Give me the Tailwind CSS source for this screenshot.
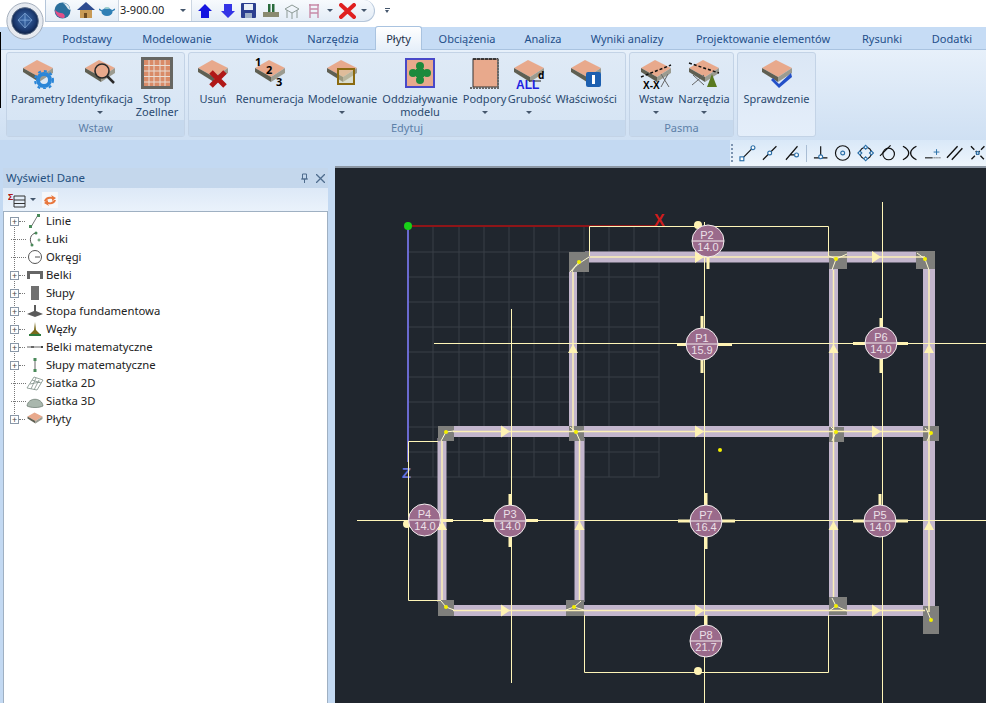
<!DOCTYPE html>
<html lang="pl">
<head>
  <meta charset="UTF-8" />
  <title>Płyty</title>
  <script src="https://cdn.jsdelivr.net/npm/@tailwindcss/browser@4"></script>
</head>
<body class="relative w-[986px] h-[703px] overflow-hidden bg-[#c3d9f2] font-['Noto_Sans','DejaVu_Sans',sans-serif] text-[#2b4a70]">

  <!-- shared icon parts -->
  <svg class="hidden">
    <symbol id="slab" viewBox="0 0 32 32">
      <polygon points="1,11 15,3 31,11 17,20" fill="#e8a98c"/>
      <polygon points="1,11 17,20 17,25 1,15" fill="#5f5f52"/>
      <polygon points="17,20 31,11 31,16 17,25" fill="#9b9b90"/>
    </symbol>
  </svg>

  <!-- logo button -->
  <svg class="absolute left-[6px] top-[2px] z-20" width="38" height="38" viewBox="0 0 44 44">
    <defs>
      <radialGradient id="orb" cx="50%" cy="45%" r="55%">
        <stop offset="0%" stop-color="#3f6fb0"/><stop offset="70%" stop-color="#1c3a70"/><stop offset="100%" stop-color="#0d2045"/>
      </radialGradient>
    </defs>
    <circle cx="22" cy="22" r="21" fill="#e6eaf0" stroke="#9aa6b5"/>
    <circle cx="22" cy="22" r="15.5" fill="url(#orb)" stroke="#5e6f88"/>
    <path d="M22 13l8 8-8 9-8-9z M14 21h16 M22 13v17" fill="none" stroke="#7ea6d8" stroke-width="1"/>
  </svg>
  <div class="absolute left-0 top-[32px] w-px h-[76px] bg-black z-10"></div>

  <!-- quick access bar -->
  <div class="h-[27px] bg-white flex items-start pl-[45px]">
    <div class="w-[330px] h-[22px] flex items-center pl-[8px] bg-gradient-to-b from-[#f7fafd] to-[#e3ecf6] border border-t-0 border-[#b5c6da] rounded-br-[11px] rounded-tr-[11px]">
      <svg width="17" height="17" viewBox="0 0 17 17"><circle cx="8.5" cy="8.5" r="8" fill="#2b6f9c"/><path d="M1 8a8 8 0 0 0 9 8c2-2 0-5-3-5-2 0-4-1-6-3z" fill="#e0508a"/><path d="M9 1c4 0 7 3 7 7-3-1-3-4-7-7z" fill="#dfe9ef"/></svg>
      <svg class="ml-[6px]" width="18" height="17" viewBox="0 0 18 17"><polygon points="9,0 18,8 0,8" fill="#2d4c90"/><rect x="3" y="8" width="12" height="8" fill="#c89a55"/><rect x="7" y="11" width="3" height="5" fill="#6c4a20"/></svg>
      <svg class="ml-[4px]" width="16" height="12" viewBox="0 0 16 12"><ellipse cx="8" cy="7" rx="5.5" ry="4" fill="#2f7fb5"/><path d="M3 6L0 4M13 6l3-2" stroke="#2f7fb5" stroke-width="1.5"/><ellipse cx="8" cy="3" rx="2.5" ry="1" fill="#9cc"/></svg>
      <div class="ml-[3px] w-[74px] h-[21px] bg-white border-x border-[#ccd6e2] flex items-center justify-between pl-[1px] pr-[5px] text-[11px] text-[#222]">
        <span>3-900.00</span><span class="w-0 h-0 border-x-[3px] border-x-transparent border-t-[3px] border-t-[#44566c]"></span>
      </div>
      <svg class="ml-[5px]" width="16" height="16" viewBox="0 0 16 16"><path d="M8 1l7 7h-3v7H4V8H1z" fill="#1414e0"/></svg>
      <svg class="ml-[7px]" width="16" height="16" viewBox="0 0 16 16"><path d="M8 15l7-7h-3V1H4v7H1z" fill="#3434e6"/></svg>
      <svg class="ml-[5px]" width="15" height="15" viewBox="0 0 15 15"><rect width="15" height="15" rx="1" fill="#2c3f90"/><rect x="3" y="1" width="9" height="6" fill="#e8eef6"/><rect x="4" y="10" width="7" height="5" fill="#9fb0c8"/></svg>
      <svg class="ml-[6px]" width="18" height="15" viewBox="0 0 18 15"><rect x="1" y="9" width="16" height="5" fill="#8a8a70"/><rect x="6" y="1" width="2.5" height="8" fill="#2a6b3c"/><rect x="10" y="1" width="2.5" height="8" fill="#2a6b3c"/></svg>
      <svg class="ml-[4px]" width="16" height="16" viewBox="0 0 16 16" fill="none" stroke="#8d9a96"><path d="M1 6l7-4 7 4-7 4zM3 7v8M13 7v8M8 10v6"/></svg>
      <svg class="ml-[8px]" width="12" height="16" viewBox="0 0 12 16" fill="none" stroke="#c88ba8" stroke-width="1.4"><path d="M2 1v14M10 1v14M1 2h10M2 6h8M2 10h8"/></svg>
      <span class="ml-[7px] w-0 h-0 border-x-[3px] border-x-transparent border-t-[3px] border-t-[#44566c]"></span>
      <svg class="ml-[6px]" width="17" height="16" viewBox="0 0 17 16"><path d="M2 2l13 12M15 2L2 14" stroke="#e02020" stroke-width="4" stroke-linecap="round"/></svg>
      <span class="ml-[5px] w-0 h-0 border-x-[3px] border-x-transparent border-t-[3px] border-t-[#44566c]"></span>
    </div>
    <div class="ml-[10px] mt-[8px] w-[5px]"><div class="h-px bg-[#44566c] mb-[1px]"></div><div class="w-0 h-0 border-x-[2.5px] border-x-transparent border-t-[3px] border-t-[#44566c]"></div></div>
  </div>

  <!-- tabs -->
  <nav class="h-[23px] flex bg-[#c6dcf5] pl-[46px] text-[11px] text-[#1f4f8a] leading-[23px] text-center border-b border-[#a9c3e0]">
    <span class="w-[82px]">Podstawy</span>
    <span class="w-[98px]">Modelowanie</span>
    <span class="w-[72px]">Widok</span>
    <span class="w-[70px]">Narzędzia</span>
    <span class="ml-[7px] w-[47px] h-[24px] bg-gradient-to-b from-white to-[#e6eff9] border border-b-0 border-[#a9c3e0] rounded-t-[3px] text-[#1c2f48] -mt-[1px]">Płyty</span>
    <span class="w-[90px]">Obciążenia</span>
    <span class="w-[62px]">Analiza</span>
    <span class="w-[106px]">Wyniki analizy</span>
    <span class="w-[166px]">Projektowanie elementów</span>
    <span class="w-[72px]">Rysunki</span>
    <span class="w-[68px]">Dodatki</span>
  </nav>

  <!-- ribbon -->
  <section class="h-[90px] flex gap-[3px] pl-[6px] pt-[2px] bg-gradient-to-b from-[#e7f0fa] to-[#cfe0f3] text-[11px] leading-[13px] text-center">
    <div class="w-[179px] h-[85px] flex flex-col rounded-[3px] border border-[#c3d3e6] bg-gradient-to-b from-[#dfeaf6] to-[#d5e4f4]">
      <div class="flex-1 flex">
        <div class="w-[62px] flex flex-col items-center pt-[4px]">
          <svg width="32" height="32" viewBox="0 0 32 32"><use href="#slab"/><circle cx="22" cy="23" r="6" fill="none" stroke="#2b86d8" stroke-width="4"/><circle cx="22" cy="23" r="9" fill="none" stroke="#2b86d8" stroke-width="2" stroke-dasharray="3 3"/></svg>
          <span class="mt-[3px] whitespace-nowrap">Parametry</span>
        </div>
        <div class="w-[62px] flex flex-col items-center pt-[4px]">
          <svg width="32" height="32" viewBox="0 0 32 32"><use href="#slab"/><circle cx="18" cy="14" r="7" fill="#e8a98c" stroke="#2a2a2a" stroke-width="1.6"/><path d="M23 19l7 7" stroke="#2a2a2a" stroke-width="2.5"/></svg>
          <span class="mt-[3px] whitespace-nowrap">Identyfikacja</span>
          <i class="mt-[6px] w-0 h-0 border-x-[3px] border-x-transparent border-t-[3px] border-t-[#44566c]"></i>
        </div>
        <div class="w-[52px] flex flex-col items-center pt-[4px]">
          <svg width="32" height="32" viewBox="0 0 32 32"><rect width="32" height="32" fill="#666662"/><path d="M3 3h26v26H3z" fill="#d98b68"/><path d="M3 8.500h26M3 14h26M3 19.500h26M3 25h26M8 3v26M13 3v26M19 3v26M24 3v26" stroke="#e9ddd4" stroke-width="1"/></svg>
          <span class="mt-[3px]">Strop<br>Zoellner</span>
        </div>
      </div>
      <div class="h-[16px] bg-[#c6d9ee] text-[#5d80a8] leading-[16px]">Wstaw</div>
    </div>

    <div class="w-[438px] h-[85px] flex flex-col rounded-[3px] border border-[#c3d3e6] bg-gradient-to-b from-[#dfeaf6] to-[#d5e4f4]">
      <div class="flex-1 flex">
        <div class="w-[48px] flex flex-col items-center pt-[4px]">
          <svg width="32" height="32" viewBox="0 0 32 32"><use href="#slab"/><path d="M14 15l14 14M28 15L14 29" stroke="#b01818" stroke-width="5"/></svg>
          <span class="mt-[3px]">Usuń</span>
        </div>
        <div class="w-[66px] flex flex-col items-center pt-[4px]">
          <svg class="overflow-visible" width="32" height="32" viewBox="0 0 32 32"><use href="#slab"/><text x="1" y="9" class="text-[11px] font-bold" fill="#000">1</text><text x="12" y="17" class="text-[11px] font-bold" fill="#000">2</text><text x="22" y="29" class="text-[11px] font-bold" fill="#000">3</text></svg>
          <span class="mt-[3px] whitespace-nowrap">Renumeracja</span>
        </div>
        <div class="w-[80px] flex flex-col items-center pt-[4px]">
          <svg width="32" height="32" viewBox="0 0 32 32"><use href="#slab"/><rect x="12" y="12" width="16" height="15" fill="#d5cfa8" fill-opacity=".5" stroke="#8a6a10" stroke-width="2"/></svg>
          <span class="mt-[3px] whitespace-nowrap">Modelowanie</span>
          <i class="mt-[6px] w-0 h-0 border-x-[3px] border-x-transparent border-t-[3px] border-t-[#44566c]"></i>
        </div>
        <div class="w-[76px] flex flex-col items-center pt-[4px]">
          <svg width="32" height="32" viewBox="0 0 32 32"><rect x="2" y="2" width="28" height="28" fill="#e8a98c" stroke="#4848c8" stroke-width="2"/><circle cx="16" cy="9" r="4" fill="#1c8a3c"/><circle cx="16" cy="23" r="4" fill="#1c8a3c"/><circle cx="9" cy="16" r="4" fill="#1c8a3c"/><circle cx="23" cy="16" r="4" fill="#1c8a3c"/><rect x="12" y="12" width="8" height="8" fill="#1c8a3c"/></svg>
          <span class="mt-[3px] whitespace-nowrap">Oddziaływanie<br>modelu</span>
        </div>
        <div class="w-[54px] flex flex-col items-center pt-[4px]">
          <svg width="32" height="32" viewBox="0 0 32 32"><rect x="4" y="2" width="25" height="28" fill="#e8a98c" stroke="#333"/><path d="M4 2h25" stroke="#222" stroke-width="1.5" stroke-dasharray="3 1"/><path d="M1 31h30M29 2v28" stroke="#666" stroke-dasharray="2 1" stroke-width="2"/></svg>
          <span class="mt-[3px]">Podpory</span>
          <i class="mt-[6px] w-0 h-0 border-x-[3px] border-x-transparent border-t-[3px] border-t-[#44566c]"></i>
        </div>
        <div class="w-[36px] flex flex-col items-center pt-[4px]">
          <svg class="overflow-visible" width="32" height="32" viewBox="0 0 32 32"><use href="#slab"/><path d="M16 24h12" stroke="#222"/><text x="25" y="22" class="text-[10px] font-bold" fill="#000">d</text><text x="3" y="32" class="text-[12px] font-bold font-['Liberation_Sans']" fill="#2020e0">ALL</text></svg>
          <span class="mt-[3px] whitespace-nowrap">Grubość</span>
          <i class="mt-[6px] w-0 h-0 border-x-[3px] border-x-transparent border-t-[3px] border-t-[#44566c]"></i>
        </div>
        <div class="w-[78px] flex flex-col items-center pt-[4px]">
          <svg width="32" height="32" viewBox="0 0 32 32"><use href="#slab"/><rect x="16" y="15" width="15" height="15" rx="2" fill="#1c5fb0"/><rect x="22" y="18" width="3" height="9" fill="#fff"/></svg>
          <span class="mt-[3px]">Właściwości</span>
        </div>
      </div>
      <div class="h-[16px] bg-[#c6d9ee] text-[#5d80a8] leading-[16px]">Edytuj</div>
    </div>

    <div class="w-[105px] h-[85px] flex flex-col rounded-[3px] border border-[#c3d3e6] bg-gradient-to-b from-[#dfeaf6] to-[#d5e4f4]">
      <div class="flex-1 flex pl-[1px]">
        <div class="w-[50px] flex flex-col items-center pt-[4px]">
          <svg class="overflow-visible" width="32" height="32" viewBox="0 0 32 32"><use href="#slab"/><path d="M1 20L31 8" stroke="#111" stroke-width="1.5" stroke-dasharray="3 2"/><path d="M21 17l8 13M28 17l-7 13" stroke="#666"/><text x="3" y="32" class="text-[10px] font-bold font-['Liberation_Sans']" fill="#000">X-X</text></svg>
          <span class="mt-[3px]">Wstaw</span>
          <i class="mt-[6px] w-0 h-0 border-x-[3px] border-x-transparent border-t-[3px] border-t-[#44566c]"></i>
        </div>
        <div class="w-[46px] flex flex-col items-center pt-[4px]">
          <svg width="32" height="32" viewBox="0 0 32 32"><use href="#slab"/><path d="M1 6l30 10" stroke="#111" stroke-width="1.5" stroke-dasharray="3 2"/><path d="M4 28L16 18M16 28L5 18" stroke="#666"/><path d="M24 17l-5 13h10z" fill="#5a7a20"/></svg>
          <span class="mt-[3px] whitespace-nowrap">Narzędzia</span>
          <i class="mt-[6px] w-0 h-0 border-x-[3px] border-x-transparent border-t-[3px] border-t-[#44566c]"></i>
        </div>
      </div>
      <div class="h-[16px] bg-[#c6d9ee] text-[#5d80a8] leading-[16px]">Pasma</div>
    </div>

    <div class="w-[79px] h-[85px] flex flex-col items-center pt-[4px] rounded-[3px] border border-[#c3d3e6] bg-gradient-to-b from-[#dbe7f5] to-[#e4eefa]">
      <svg width="32" height="32" viewBox="0 0 32 32"><use href="#slab"/><path d="M12 21l6 6L30 16l1 4-13 11-8-8z" fill="#2350c8"/></svg>
      <span class="mt-[3px]">Sprawdzenie</span>
    </div>
  </section>

  <!-- snap toolbar -->
  <div class="h-[26px] flex justify-end bg-[#c3d9f2]">
    <div class="w-[256px] h-[26px] flex items-center gap-[5px] pl-[1px] bg-gradient-to-b from-[#d9e8f8] to-[#eef5fc]">
      <span class="w-[2px] h-[18px] mr-[1px] border-l-2 border-dotted border-[#7d94b0]"></span>
      <svg width="18" height="18" viewBox="0 0 18 18" fill="none" stroke="#111" stroke-width="1.2"><path d="M3 15L15 3"/><circle cx="14.5" cy="3.5" r="2" fill="#fff" stroke="#2b6fa8"/><rect x="1" y="13" width="4" height="4" fill="#fff" stroke="#2b6fa8"/></svg>
      <svg width="18" height="18" viewBox="0 0 18 18" fill="none" stroke="#111" stroke-width="1.2"><path d="M2 16L16 2"/><circle cx="9" cy="9" r="2" fill="#fff" stroke="#2b6fa8"/></svg>
      <svg width="18" height="18" viewBox="0 0 18 18" fill="none" stroke="#111" stroke-width="1.2"><path d="M2 16L14 2M6 11h6"/><circle cx="13" cy="11" r="2" fill="#fff" stroke="#2b6fa8"/></svg>
      <span class="w-px h-[17px] bg-[#a9bdd4]"></span>
      <svg width="18" height="18" viewBox="0 0 18 18" fill="none" stroke="#111" stroke-width="1.2"><path d="M9 2v11M2 14h14"/><circle cx="9" cy="13" r="2" fill="#fff" stroke="#2b6fa8"/></svg>
      <svg width="18" height="18" viewBox="0 0 18 18" fill="none" stroke="#111" stroke-width="1.2"><circle cx="9" cy="9" r="7.5"/><circle cx="9" cy="9" r="2" stroke="#2b6fa8"/></svg>
      <svg width="18" height="18" viewBox="0 0 18 18" fill="none" stroke="#111" stroke-width="1.2"><circle cx="9" cy="9" r="6"/><path d="M9 1l2 2-2 2-2-2zM9 13l2 2-2 2-2-2zM1 9l2-2 2 2-2 2zM13 9l2-2 2 2-2 2z" fill="#fff" stroke="#2b6fa8"/></svg>
      <svg width="18" height="18" viewBox="0 0 18 18" fill="none" stroke="#111" stroke-width="1.2"><circle cx="10" cy="10" r="6"/><path d="M1 12L12 1"/></svg>
      <svg width="18" height="18" viewBox="0 0 18 18" fill="none" stroke="#111" stroke-width="1.4"><path d="M2 2C10 6 10 12 2 16M16 2C8 6 8 12 16 16"/></svg>
      <svg width="18" height="18" viewBox="0 0 18 18" fill="none"><path d="M1 14h8" stroke="#222" stroke-width="1.2"/><path d="M10 14h7" stroke="#222" stroke-dasharray="1 1"/><path d="M13 5v6M10 8h6" stroke="#2b6fa8"/></svg>
      <svg width="18" height="18" viewBox="0 0 18 18" fill="none" stroke="#111" stroke-width="1.4"><path d="M1 14L12 2M6 16L17 4"/></svg>
      <svg width="18" height="18" viewBox="0 0 18 18" fill="none" stroke="#111" stroke-width="1.4"><path d="M2 2l14 14M16 2L2 16" stroke-dasharray="5 2"/><circle cx="9" cy="9" r="1.5" fill="#fff" stroke="#2b6fa8"/></svg>
    </div>
  </div>

  <!-- main area -->
  <main class="h-[537px] flex">
    <!-- data panel -->
    <aside class="w-[335px] pt-[2px] pl-[3px] pr-[7px] flex flex-col">
      <div class="h-[20px] flex items-center justify-between pl-[3px] pr-[3px] bg-[#c4d7ec] text-[11.5px] text-[#25507f]">
        <span>Wyświetl Dane</span>
        <span class="flex items-center gap-[7px] text-[#5d7c9e]">
          <svg width="9" height="10" viewBox="0 0 9 10" fill="none" stroke="#4f6d8e"><path d="M2.5 1h4v5h-4zM1 6h7M4.5 6v4"/></svg>
          <svg width="9" height="9" viewBox="0 0 9 9" stroke="#4f6d8e" stroke-width="1.3"><path d="M0 0l9 9M9 0L0 9"/></svg>
        </span>
      </div>
      <div class="h-[23px] flex items-center pl-[5px] bg-gradient-to-b from-[#dde9f7] to-[#eaf2fb]">
        <svg width="18" height="17" viewBox="0 0 18 17"><text x="0" y="9" class="text-[9px] font-bold" fill="#b01818">Σ</text><path d="M6 5h11v11H6zM6 9h11M6 12.500h11" fill="none" stroke="#333"/></svg>
        <i class="ml-[4px] w-0 h-0 border-x-[3px] border-x-transparent border-t-[3px] border-t-[#44566c]"></i>
        <svg class="ml-[6px]" width="16" height="16" viewBox="0 0 16 16"><rect width="16" height="16" fill="#f4f7fb"/><path d="M2 9c1-4 5-5 8-4l-1-2 5 3-4 3V7C7 6 5 7 4 10zM14 8c-1 4-5 5-8 4l1 2-5-3 4-3v2c3 1 4 0 6-2z" fill="#e8763c"/></svg>
      </div>
      <div class="relative flex-1 bg-white border border-b-0 border-[#9fb0c2] pl-[6px] text-[11.3px] text-[#222]">
        <div class="absolute left-[10px] top-[5px] h-[205px] border-l border-dotted border-[#777]"></div>
        <div class="h-[18px] flex items-center"><i class="relative w-[9px] h-[9px] bg-white border border-[#8a98a8] flex items-center justify-center text-[9px] leading-none not-italic text-[#444]">+</i><i class="w-[6px] border-t border-dotted border-[#777]"></i><svg class="ml-[1px] w-[18px]" height="16" viewBox="0 0 18 16"><path d="M5 14L12 2" stroke="#777"/><rect x="3" y="12" width="3" height="3" fill="#4a8a5a"/><rect x="11" y="1" width="3" height="3" fill="#4a8a5a"/></svg><span class="ml-[2px]">Linie</span></div>
        <div class="h-[18px] flex items-center"><i class="w-[15px] border-t border-dotted border-[#777] ml-[1px] -mr-[1px]"></i><svg class="ml-[1px] w-[18px]" height="16" viewBox="0 0 18 16" fill="none"><path d="M10 2C4 3 3 9 6 14" stroke="#555"/><circle cx="10" cy="2" r="1.500" fill="#4a8a5a"/><circle cx="6" cy="14" r="1.500" fill="#4a8a5a"/><circle cx="13" cy="9" r="1" stroke="#4a8a5a"/></svg><span class="ml-[2px]">Łuki</span></div>
        <div class="h-[18px] flex items-center"><i class="w-[15px] border-t border-dotted border-[#777] ml-[1px] -mr-[1px]"></i><svg class="ml-[1px] w-[18px]" height="16" viewBox="0 0 18 16" fill="none" stroke="#555"><circle cx="9" cy="8" r="6.500"/><path d="M9 8h5"/></svg><span class="ml-[2px]">Okręgi</span></div>
        <div class="h-[18px] flex items-center"><i class="relative w-[9px] h-[9px] bg-white border border-[#8a98a8] flex items-center justify-center text-[9px] leading-none not-italic text-[#444]">+</i><i class="w-[6px] border-t border-dotted border-[#777]"></i><svg class="ml-[1px] w-[18px]" height="16" viewBox="0 0 18 16"><path d="M1 4h16v8h-3V7H4v5H1z" fill="#666"/></svg><span class="ml-[2px]">Belki</span></div>
        <div class="h-[18px] flex items-center"><i class="relative w-[9px] h-[9px] bg-white border border-[#8a98a8] flex items-center justify-center text-[9px] leading-none not-italic text-[#444]">+</i><i class="w-[6px] border-t border-dotted border-[#777]"></i><svg class="ml-[1px] w-[18px]" height="16" viewBox="0 0 18 16"><rect x="5" y="1" width="8" height="14" fill="#707070"/></svg><span class="ml-[2px]">Słupy</span></div>
        <div class="h-[18px] flex items-center"><i class="relative w-[9px] h-[9px] bg-white border border-[#8a98a8] flex items-center justify-center text-[9px] leading-none not-italic text-[#444]">+</i><i class="w-[6px] border-t border-dotted border-[#777]"></i><svg class="ml-[1px] w-[18px]" height="16" viewBox="0 0 18 16"><path d="M8 2h2v6l7 3-8 3-8-3 7-3z" fill="#5b5b5b"/></svg><span class="ml-[2px] whitespace-nowrap">Stopa fundamentowa</span></div>
        <div class="h-[18px] flex items-center"><i class="relative w-[9px] h-[9px] bg-white border border-[#8a98a8] flex items-center justify-center text-[9px] leading-none not-italic text-[#444]">+</i><i class="w-[6px] border-t border-dotted border-[#777]"></i><svg class="ml-[1px] w-[18px]" height="16" viewBox="0 0 18 16"><path d="M9 1l1 8 5 5H3l5-5z" fill="#7a6a1c"/><path d="M3 14h12" stroke="#2d7a3c" stroke-width="2"/></svg><span class="ml-[2px]">Węzły</span></div>
        <div class="h-[18px] flex items-center"><i class="relative w-[9px] h-[9px] bg-white border border-[#8a98a8] flex items-center justify-center text-[9px] leading-none not-italic text-[#444]">+</i><i class="w-[6px] border-t border-dotted border-[#777]"></i><svg class="ml-[1px] w-[18px]" height="16" viewBox="0 0 18 16"><path d="M1 8h16" stroke="#666"/><rect x="5" y="7" width="3" height="2" fill="#666"/><rect x="15" y="7" width="2" height="2" fill="#444"/></svg><span class="ml-[2px] whitespace-nowrap">Belki matematyczne</span></div>
        <div class="h-[18px] flex items-center"><i class="relative w-[9px] h-[9px] bg-white border border-[#8a98a8] flex items-center justify-center text-[9px] leading-none not-italic text-[#444]">+</i><i class="w-[6px] border-t border-dotted border-[#777]"></i><svg class="ml-[1px] w-[18px]" height="16" viewBox="0 0 18 16"><path d="M9 2v12" stroke="#666"/><rect x="7.500" y="1" width="3" height="3" fill="#4a8a5a"/><rect x="7.500" y="12" width="3" height="3" fill="#4a8a5a"/></svg><span class="ml-[2px] whitespace-nowrap">Słupy matematyczne</span></div>
        <div class="h-[18px] flex items-center"><i class="w-[15px] border-t border-dotted border-[#777] ml-[1px] -mr-[1px]"></i><svg class="ml-[1px] w-[18px]" height="16" viewBox="0 0 18 16" fill="none" stroke="#7f8f88" stroke-width=".8"><path d="M1 13L8 2l9 3-6 10zM4 9l10-2M6 5l9 3M5 14l5-11M8 15l5-10"/></svg><span class="ml-[2px]">Siatka 2D</span></div>
        <div class="h-[18px] flex items-center"><i class="w-[15px] border-t border-dotted border-[#777] ml-[1px] -mr-[1px]"></i><svg class="ml-[1px] w-[18px]" height="16" viewBox="0 0 18 16"><path d="M1 13C2 4 16 4 17 13c-4 2-12 2-16 0z" fill="#a9b7ad" stroke="#66756c" stroke-width=".7"/></svg><span class="ml-[2px]">Siatka 3D</span></div>
        <div class="h-[18px] flex items-center"><i class="relative w-[9px] h-[9px] bg-white border border-[#8a98a8] flex items-center justify-center text-[9px] leading-none not-italic text-[#444]">+</i><i class="w-[6px] border-t border-dotted border-[#777]"></i><svg class="ml-[1px] w-[18px]" height="16" viewBox="0 0 32 32"><use href="#slab"/></svg><span class="ml-[2px]">Płyty</span></div>
      </div>
    </aside>

    <!-- model view -->
    <div class="w-[651px] flex flex-col">
      <div class="h-[2px] bg-[#8b96a3]"></div>
      <svg class="bg-[#20262e] font-['Liberation_Sans',sans-serif]" width="651" height="535" viewBox="335 168 651 535">
        <path fill="none" stroke="#383e46" d="M433 226V477M459 226V477M484 226V477M509 226V477M534 226V477M559 226V477M584 226V477M609 226V477M634 226V477M659 226V477M408 252H659M408 277H659M408 302H659M408 327H659M408 352H659M408 377H659M408 402H659M408 427H659M408 452H659M408 477H659"/>
        <path d="M408 226H655" stroke="#8f1518" stroke-width="2"/>
        <path d="M408 226V462" stroke="#6a6ad0" stroke-width="2"/>
        <text x="654" y="226" class="text-[16px] font-bold" fill="#d01c1c">X</text>
        <text x="402" y="478" class="text-[15px] font-bold" fill="#6a74d8">Z</text>
        <circle cx="408" cy="226" r="4" fill="#18d018"/>

        <!-- beams -->
        <g fill="none" stroke="#c3b6cd">
          <path d="M585 257H925M448 431.500H930M448 610.500H925" stroke-width="11"/>
          <path d="M573 270V430" stroke-width="8"/>
          <path d="M442 438V602" stroke-width="9"/>
          <path d="M579.500 438V602" stroke-width="10"/>
          <path d="M833.500 262V602" stroke-width="9"/>
          <path d="M929 262V608" stroke-width="12"/>
        </g>
        <!-- nodes -->
        <g fill="#7f7f7c">
          <rect x="569" y="252" width="20" height="20"/><rect x="829" y="251" width="18" height="18"/><rect x="916" y="251" width="19" height="18"/>
          <rect x="438" y="426" width="16" height="15"/><rect x="569" y="426" width="15" height="15"/><rect x="829" y="427" width="15" height="15"/><rect x="923" y="426" width="16" height="15"/>
          <rect x="438" y="600" width="16" height="16"/><rect x="566" y="600" width="18" height="16"/><rect x="829" y="597" width="18" height="18"/><rect x="923" y="606" width="16" height="28"/>
        </g>
        <!-- centre lines -->
        <g fill="none" stroke="#fbefb6" stroke-width="1.500">
          <path d="M590 257H925M453 431.500H930M453 610.500H925"/>
          <path d="M573 272V432M442 441V600M579.500 441V600M833.500 270V597M929 270V612"/>
        </g>
        <g fill="none" stroke="#fffbd0">
          <path d="M572 272C574 266 580 263 589 257M579 262L570 272"/>
          <path d="M829 256L836 259L847 254M836 259L832 270M925 259L917 253M925 259L929 270"/>
          <path d="M446 432L454 431M446 432L441 441M576 432L570 427M576 432L584 431M576 432L580 441M836 432L831 427M836 432L832 441M931 433L925 428M931 433L927 441"/>
          <path d="M446 607L441 601M446 607L454 610M574 607L581 601M574 607L566 610M574 607L584 610M836 606L832 598M836 606L847 611M836 606L829 611M931 620L926 608"/>
        </g>
        <!-- thin lines -->
        <g fill="none" stroke="#fff6b8">
          <path d="M434 343.500H986M357 520.500H986M704.500 222V703M511.500 309V683M882.500 202V703"/>
          <path d="M589.500 256V226.500H828.500V256"/>
          <path d="M408.500 441.500V600.500H441M408.500 441.500H438"/>
          <path d="M584.500 615V672.500H828.500V615"/>
        </g>
        <g fill="#fff3b4">
          <circle cx="698" cy="225" r="4"/><circle cx="407" cy="524" r="4"/><circle cx="698" cy="671" r="4"/>
        </g>
        <g fill="#f4f000">
          <circle cx="579" cy="262" r="2"/><circle cx="836" cy="259" r="2"/><circle cx="925" cy="259" r="2"/>
          <circle cx="446" cy="432" r="2"/><circle cx="576" cy="432" r="2"/><circle cx="836" cy="432" r="2"/><circle cx="931" cy="433" r="2"/>
          <circle cx="446" cy="607" r="2"/><circle cx="574" cy="607" r="2"/><circle cx="836" cy="606" r="2"/><circle cx="931" cy="620" r="2"/>
          <circle cx="720" cy="450" r="2"/>
        </g>
        <!-- arrow heads -->
        <g fill="#fff3b4">
          <path d="M695 251l9 6-9 6zM872 251l9 6-9 6zM501 425.500l9 6-9 6zM695 425.500l9 6-9 6zM872 425.500l9 6-9 6zM501 604.500l9 6-9 6zM695 604.500l9 6-9 6zM872 604.500l9 6-9 6z"/>
          <path d="M573 344l5 9h-10zM833.500 344l5 9h-10zM929 344l5 9h-10zM442 521l5 9h-10zM579.500 521l5 9h-10zM833.500 521l5 9h-10zM929 521l5 9h-10z"/>
        </g>
        <!-- reinforcement stubs -->
        <g fill="none" stroke="#fff3b4" stroke-width="3">
          <path d="M708 257V269M702 316V373M677 344.500H732M881 318V373M853 343.500H908M880 494V505M853 521H908M706 493V549M678 521H735M510 494V547M483 520.500H538M440 520.500H453M706 615V625"/>
        </g>
        <!-- column heads -->
        <g fill="#9a6a8b" stroke="#f5eff0">
          <circle cx="708" cy="241" r="16"/><circle cx="702" cy="344" r="16"/><circle cx="881" cy="343" r="16"/><circle cx="880" cy="521" r="16"/>
          <circle cx="706" cy="521" r="16"/><circle cx="510" cy="521" r="16"/><circle cx="424.500" cy="520" r="16"/><circle cx="706" cy="641" r="16"/>
        </g>
        <path fill="none" stroke="#f5eff0" d="M692 241H724M686 344H718M865 343H897M864 521H896M690 521H722M494 521H526M409 520H440M690 641H722"/>
        <g class="text-[11px]" fill="#ece0e8" text-anchor="middle">
          <text x="707" y="239">P2</text><text x="708" y="251">14.0</text>
          <text x="702" y="342">P1</text><text x="702" y="354">15.9</text>
          <text x="881" y="341">P6</text><text x="881" y="353">14.0</text>
          <text x="880" y="519">P5</text><text x="880" y="531">14.0</text>
          <text x="706" y="519">P7</text><text x="706" y="531">16.4</text>
          <text x="510" y="518">P3</text><text x="510" y="530">14.0</text>
          <text x="424.500" y="518">P4</text><text x="425" y="530">14.0</text>
          <text x="706" y="639">P8</text><text x="706" y="651">21.7</text>
        </g>
      </svg>
    </div>
  </main>
</body>
</html>
